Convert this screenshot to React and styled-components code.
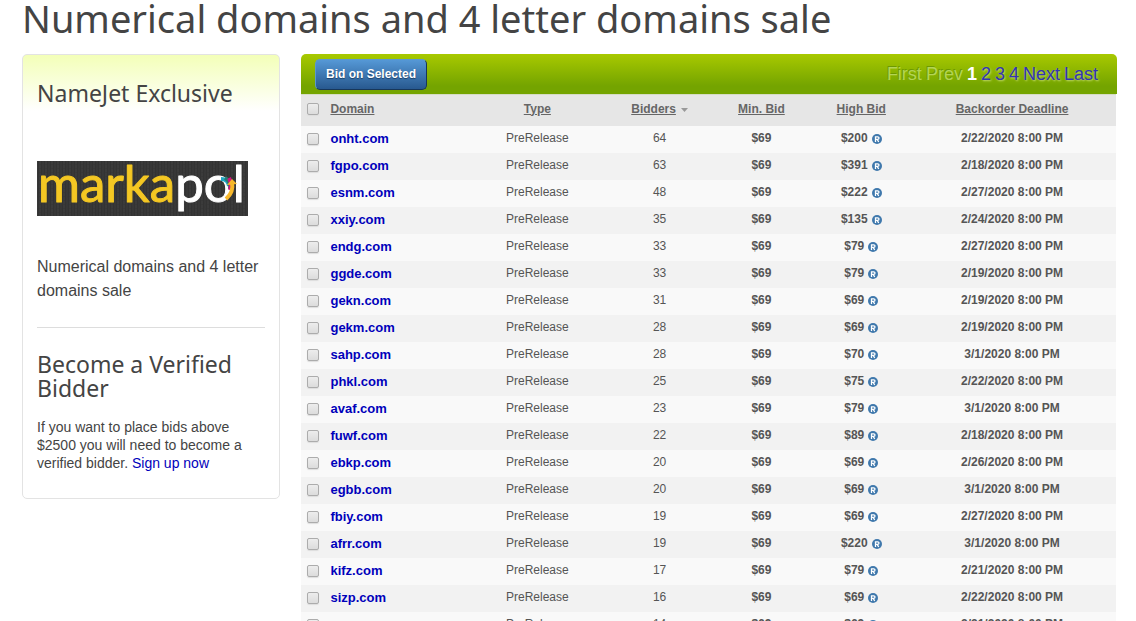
import React, { useState } from 'react';
import styled, { createGlobalStyle } from 'styled-components';

const GlobalStyle = createGlobalStyle`
    html, body {
        margin: 0;
        height: 100%;
        overflow: hidden;
    }
    body {
        background: #fff;
        color: #444;
        font-family: "Liberation Sans", Arial, sans-serif;
        font-size: 14px;
    }
    #root {
        height: 100%;
        overflow-y: auto;
        scrollbar-width: none;
    }
    a {
        color: #0000bb;
        text-decoration: none;
    }
`;

const Page = styled.div`
    padding: 0 19px 0 22px;
`;
const Title = styled.h1`
    margin: 0 0 18px;
    font: 400 38px/36px "Noto Sans", "Open Sans", sans-serif;
    color: #444;
    white-space: nowrap;
`;
const Columns = styled.div`
    display: flex;
    align-items: flex-start;
    gap: 21px;
`;

const Sidebar = styled.aside`
    box-sizing: border-box;
    flex: 0 0 258px;
    padding: 26px 14px 26px;
    border: 1px solid #e3e3e3;
    border-radius: 5px;
    background: linear-gradient(#f3ffb8, #fff 56px);
`;
const SideTitle = styled.h2`
    margin: 0;
    font: 400 23px/24px "Noto Sans", "Open Sans", sans-serif;
    color: #444;
`;
const Logo = styled.svg`
    display: block;
    margin: 56px 0 39px;
`;
const Intro = styled.p`
    margin: 0;
    padding-bottom: 24px;
    border-bottom: 1px solid #ddd;
    font-size: 16px;
    line-height: 24px;
`;
const Verified = styled.section`
    padding-top: 24px;
`;
const Note = styled.p`
    margin: 18px 0 0;
    font-size: 14px;
    line-height: 18px;
`;

const Main = styled.main`
    flex: 1;
    min-width: 0;
`;
const Toolbar = styled.div`
    display: flex;
    justify-content: space-between;
    align-items: center;
    box-sizing: border-box;
    height: 40px;
    padding: 0 19px 0 14px;
    border-radius: 5px 5px 0 0;
    background: linear-gradient(#a8c900, #74a400 80%);
`;
const BidButton = styled.button`
    height: 31px;
    padding: 0 10px;
    border: 1px solid;
    border-color: #5a97d0 #17375a #17375a #5a97d0;
    border-radius: 5px;
    background: linear-gradient(#5598d6, #28598f);
    color: #fff;
    font: bold 12px "Liberation Sans", Arial, sans-serif;
    text-shadow: 0 1px 1px #1c4068;
    cursor: pointer;
`;
const Pager = styled.nav`
    display: flex;
    gap: 4px;
    font-size: 18px;
    line-height: 20px;
    text-shadow: 1px 1px 2px #c5dc72;
    a {
        color: #3333b5;
    }
`;
const PagerOff = styled.span`
    color: #b4d455;
    text-shadow: -1px -1px 0 #6d9900;
`;
const PagerCurrent = styled.strong`
    color: #fff;
    text-shadow: none;
`;

const Table = styled.table`
    width: calc(100% - 1px);
    table-layout: fixed;
    border-collapse: collapse;
    font-size: 12px;
    color: #555;
`;
const Col = styled.col`
    width: ${props => props.$width};
`;
const Head = styled.th`
    height: 32px;
    padding: 0 0 3px;
    box-sizing: border-box;
    background: #e6e6e6;
    box-shadow: inset 0 1px 0 #d5dcc5;
    text-align: ${props => props.$left ? 'left' : 'center'};
    padding-left: ${props => props.$left ? '5px' : '0'};
    white-space: nowrap;
    a {
        color: #666;
        text-decoration: underline;
    }
`;
const SortArrow = styled.svg`
    margin-left: 5px;
    vertical-align: 1px;
`;
const Row = styled.tr`
    height: 27px;
    background: #f9f9f9;
    &:nth-child(even) {
        background: #f2f2f2;
    }
`;
const Cell = styled.td`
    height: 24px;
    padding: 0 0 3px;
    text-align: center;
    white-space: nowrap;
    font-weight: ${props => props.$bold ? 'bold' : 'normal'};
`;
const DomainCell = styled(Cell)`
    padding-left: 5px;
    text-align: left;
    font-size: 13px;
    font-weight: bold;
`;
const Check = styled.input`
    appearance: none;
    display: block;
    box-sizing: border-box;
    width: 12px;
    height: 12px;
    margin: 1px 0 0 6px;
    border: 1px solid #acacac;
    border-radius: 2px;
    background: linear-gradient(#ededed, #dcdcdc);
    box-shadow: 0 1px 1px #ddd;
    &:checked {
        background: #5b7fa8;
    }
`;
const ReserveIcon = styled.svg`
    margin-left: 3px;
    vertical-align: -2px;
`;

const lots = [
    ['onht.com', 64, 200, '2/22/2020'],
    ['fgpo.com', 63, 391, '2/18/2020'],
    ['esnm.com', 48, 222, '2/27/2020'],
    ['xxiy.com', 35, 135, '2/24/2020'],
    ['endg.com', 33, 79, '2/27/2020'],
    ['ggde.com', 33, 79, '2/19/2020'],
    ['gekn.com', 31, 69, '2/19/2020'],
    ['gekm.com', 28, 69, '2/19/2020'],
    ['sahp.com', 28, 70, '3/1/2020'],
    ['phkl.com', 25, 75, '2/22/2020'],
    ['avaf.com', 23, 79, '3/1/2020'],
    ['fuwf.com', 22, 89, '2/18/2020'],
    ['ebkp.com', 20, 69, '2/26/2020'],
    ['egbb.com', 20, 69, '3/1/2020'],
    ['fbiy.com', 19, 69, '2/27/2020'],
    ['afrr.com', 19, 220, '3/1/2020'],
    ['kifz.com', 17, 79, '2/21/2020'],
    ['sizp.com', 16, 69, '2/22/2020'],
    ['xcon.com', 14, 69, '2/21/2020'],
];

const widths = ['3%', '17%', '18%', '12%', '13%', '11.5%', '25.5%'];

const MarkapolLogo = () => (
    <Logo width="211" height="55" viewBox="0 0 211 55" role="img" aria-label="markapol">
        <defs>
            <pattern id="knit" width="6" height="4" patternUnits="userSpaceOnUse">
                <rect width="6" height="4" fill="#383838" />
                <path d="M1 0l1 2-1 2M4 0l1 2-1 2" stroke="#313131" fill="none" />
                <path d="M3 0v3" stroke="#3e3e3e" />
            </pattern>
        </defs>
        <rect width="211" height="55" fill="url(#knit)" />
        <text x="1" y="41" fontFamily="Lato, sans-serif" fontSize="51" fill="#f4c723" stroke="#f4c723" strokeLinejoin="round">
            marka<tspan fill="#fff" stroke="#fff">pol</tspan>
        </text>
        <g fill="none" strokeWidth="4">
            <path d="M184 18q7 0 8 7" stroke="#20a5c4" />
            <path d="M188 17q6 3 5 11" stroke="#267b70" />
            <path d="M192 17q3 5 1 12" stroke="#d4147f" />
            <path d="M195 22q2 9-6 16" stroke="#f7b82b" />
        </g>
        <path d="M190 24l5-6 5 5z" fill="#f7b82b" />
    </Logo>
);

const Reserve = () => (
    <ReserveIcon width="11" height="10" viewBox="0 0 11 10" aria-label="Reserve">
        <circle cx="6" cy="5" r="5" fill="#3f78ac" />
        <path d="M4.5 8V2.8h2.2a1.2 1.2 0 0 1 0 2.6H4.5M6.2 5.4l1.5 2.6" fill="none" stroke="#fff" strokeWidth="1.3" />
    </ReserveIcon>
);

export default function App() {
    const [selected, setSelected] = useState([]);

    const toggle = (name) => {
        setSelected(selected.includes(name) ? selected.filter(n => n !== name) : [...selected, name]);
    }

    const toggleAll = () => {
        setSelected(selected.length === lots.length ? [] : lots.map(l => l[0]));
    }

    return (
        <Page>
            <GlobalStyle />
            <Title>Numerical domains and 4 letter domains sale</Title>
            <Columns>
                <Sidebar>
                    <SideTitle>NameJet Exclusive</SideTitle>
                    <MarkapolLogo />
                    <Intro>Numerical domains and 4 letter domains sale</Intro>
                    <Verified>
                        <SideTitle>Become a Verified Bidder</SideTitle>
                        <Note>
                            If you want to place bids above $2500 you will need to become a verified bidder. <a href="#signup">Sign up now</a>
                        </Note>
                    </Verified>
                </Sidebar>
                <Main>
                    <Toolbar>
                        <BidButton type="button">Bid on Selected</BidButton>
                        <Pager>
                            <PagerOff>First</PagerOff>
                            <PagerOff>Prev</PagerOff>
                            <PagerCurrent>1</PagerCurrent>
                            {['2', '3', '4', 'Next', 'Last'].map(p => <a href={'#' + p} key={p}>{p}</a>)}
                        </Pager>
                    </Toolbar>
                    <Table>
                        <colgroup>
                            {widths.map((w, i) => <Col $width={w} key={i} />)}
                        </colgroup>
                        <thead>
                            <tr>
                                <Head>
                                    <Check type="checkbox" aria-label="Select all" checked={selected.length === lots.length} onChange={toggleAll} />
                                </Head>
                                <Head $left><a href="#domain">Domain</a></Head>
                                <Head><a href="#type">Type</a></Head>
                                <Head>
                                    <a href="#bidders">Bidders</a>
                                    <SortArrow width="7" height="4" viewBox="0 0 7 4"><path d="M0 0h7L3.5 4z" fill="#999" /></SortArrow>
                                </Head>
                                <Head><a href="#minbid">Min. Bid</a></Head>
                                <Head><a href="#highbid">High Bid</a></Head>
                                <Head><a href="#deadline">Backorder Deadline</a></Head>
                            </tr>
                        </thead>
                        <tbody>
                            {lots.map(([name, bidders, high, date]) => (
                                <Row key={name}>
                                    <Cell>
                                        <Check type="checkbox" aria-label={name} checked={selected.includes(name)} onChange={() => toggle(name)} />
                                    </Cell>
                                    <DomainCell><a href={'#' + name}>{name}</a></DomainCell>
                                    <Cell>PreRelease</Cell>
                                    <Cell>{bidders}</Cell>
                                    <Cell $bold>$69</Cell>
                                    <Cell $bold>${high}<Reserve /></Cell>
                                    <Cell $bold>{date} 8:00 PM</Cell>
                                </Row>
                            ))}
                        </tbody>
                    </Table>
                </Main>
            </Columns>
        </Page>
    );
}
